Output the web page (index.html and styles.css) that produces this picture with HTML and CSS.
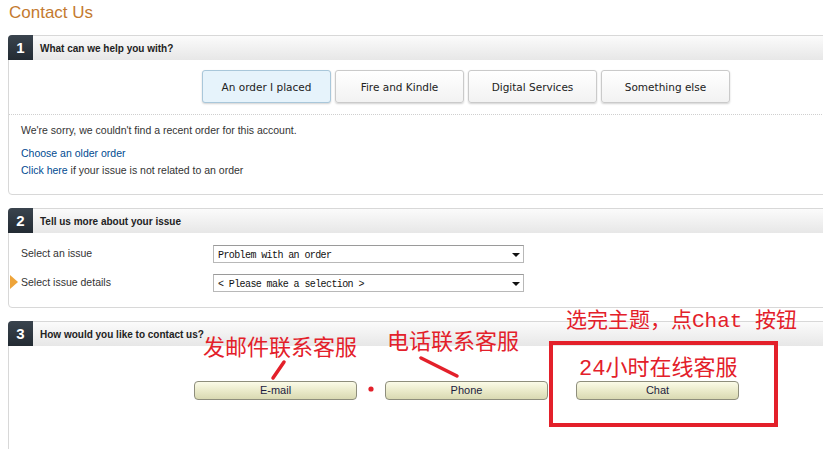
FILE: index.html
```html
<!DOCTYPE html>
<html lang="en">
<head>
  <meta charset="UTF-8" />
  <title>Contact Us</title>
  <link rel="stylesheet" href="styles.css">
</head>
<body>

  <h1 class="page-title">Contact Us</h1>

  <div class="panel">
    <div class="panel-head">
      <span class="step">1</span>
      <span class="panel-title">What can we help you with?</span>
    </div>
    <div class="topics">
      <button class="topic active">An order I placed</button>
      <button class="topic">Fire and Kindle</button>
      <button class="topic">Digital Services</button>
      <button class="topic">Something else</button>
    </div>
    <div class="order-info">
      <p class="sorry">We're sorry, we couldn't find a recent order for this account.</p>
      <p class="older"><a href="#">Choose an older order</a></p>
      <p class="other"><a href="#">Click here</a> if your issue is not related to an order</p>
    </div>
  </div>

  <div class="panel">
    <div class="panel-head">
      <span class="step">2</span>
      <span class="panel-title">Tell us more about your issue</span>
    </div>
    <div class="issue-form">
      <div class="issue-row">
        <label>Select an issue</label>
        <div class="select-box">Problem with an order</div>
      </div>
      <div class="issue-row current">
        <label>Select issue details</label>
        <div class="select-box">&lt; Please make a selection &gt;</div>
      </div>
    </div>
  </div>

  <div class="panel contact-panel">
    <div class="panel-head">
      <span class="step">3</span>
      <span class="panel-title">How would you like to contact us?</span>
    </div>
    <div class="contact-buttons">
      <button class="contact-btn">E-mail</button>
      <button class="contact-btn">Phone</button>
      <button class="contact-btn">Chat</button>
    </div>

    <!-- red notes drawn on top of the screenshot -->
    <div class="note note-top">选完主题，点Chat 按钮</div>
    <div class="note note-mail">发邮件联系客服</div>
    <div class="note note-phone">电话联系客服</div>
    <div class="note note-chat">24小时在线客服</div>
    <div class="note-box"></div>
    <svg class="note-marks" width="500" height="120" viewBox="0 0 500 120">
      <line x1="275" y1="40" x2="264" y2="56" stroke="#e3202a" stroke-width="3.5" stroke-linecap="round"/>
      <line x1="412" y1="36" x2="448" y2="54" stroke="#e3202a" stroke-width="3.5" stroke-linecap="round"/>
      <circle cx="362" cy="67" r="2.6" fill="#e3202a"/>
    </svg>
  </div>

</body>
</html>
```

FILE: styles.css
```css
html, body {
  overflow: hidden;
}
body {
  margin: 0;
  font-family: Arial, "Liberation Sans", sans-serif;
  color: #333;
  background: #fff;
}
a {
  color: #004b91;
  text-decoration: none;
}
p {
  margin: 0;
}
.page-title {
  margin: 0 0 12px 9px;
  padding-top: 3px;
  font-size: 17px;
  line-height: 20px;
  font-weight: normal;
  color: #c47a2f;
}
.panel {
  margin: 0 -40px 13px 8px;
  border: 1px solid #d8d8d8;
  border-radius: 4px;
  background: #fff;
}
.panel-head {
  display: flex;
  align-items: center;
  height: 24px;
  background: linear-gradient(#fbfbfb, #e7e7e7);
  border-radius: 4px 4px 0 0;
}
.step {
  width: 25px;
  height: 25px;
  margin: -1px 0 0 -1px;
  display: flex;
  align-items: center;
  justify-content: center;
  background: linear-gradient(#3a444e, #232b33);
  border-radius: 4px 0 0 0;
  color: #fff;
  font-weight: bold;
  font-size: 15px;
}
.panel-title {
  margin-left: 7px;
  font-size: 10px;
  font-weight: bold;
  color: #222;
}
.topics {
  display: flex;
  gap: 4px;
  padding: 10px 0 0 193px;
}
.topic {
  width: 129px;
  height: 33px;
  border: 1px solid #cacaca;
  border-radius: 3px;
  background: linear-gradient(#fff, #f2f2f2);
  box-shadow: 0 1px 2px rgba(0,0,0,0.18);
  font-family: "DejaVu Sans", Verdana, sans-serif;
  font-size: 10.5px;
  color: #222;
  padding: 0;
}
.topic.active {
  background: #e6f3fb;
  border-color: #a9c7da;
}
.order-info {
  margin-top: 11px;
  border-top: 1px dotted #cfcfcf;
  padding: 8px 12px 17px;
  font-size: 10.5px;
  line-height: 14px;
}
.older {
  margin-top: 9px;
}
.other {
  margin-top: 3px;
}
.issue-form {
  padding: 12px 0 15px 12px;
  display: flex;
  flex-direction: column;
  gap: 11px;
}
.issue-row {
  position: relative;
  display: flex;
  align-items: center;
  font-size: 10.5px;
}
.issue-row label {
  width: 192px;
  margin-top: -2px;
}
.issue-row.current::before {
  content: "";
  position: absolute;
  left: -11px;
  top: 1px;
  border-left: 8px solid #eea43a;
  border-top: 7px solid transparent;
  border-bottom: 7px solid transparent;
}
.select-box {
  position: relative;
  width: 305px;
  height: 16px;
  padding-left: 4px;
  border: 1px solid #b8b8b8;
  border-top-color: #9a9a9a;
  font-family: "Liberation Mono", monospace;
  font-size: 10px;
  letter-spacing: -0.6px;
  line-height: 19px;
  color: #111;
}
.select-box::after {
  content: "";
  position: absolute;
  right: 3px;
  top: 7px;
  border-top: 4px solid #111;
  border-left: 4px solid transparent;
  border-right: 4px solid transparent;
}
.contact-panel {
  position: relative;
}
.contact-buttons {
  display: flex;
  gap: 28px;
  padding: 35px 0 80px 185px;
}
.contact-btn {
  width: 163px;
  height: 19px;
  border: 1px solid #8e8e7c;
  border-radius: 4px;
  background: linear-gradient(#fbfbe8, #e9e9c8 55%, #d9d9b2);
  font-family: Arial, "Liberation Sans", sans-serif;
  font-size: 11px;
  line-height: 17px;
  color: #1c1c40;
  padding: 0;
}
.note {
  position: absolute;
  color: #e3202a;
  font-family: "Liberation Mono", "Noto Sans CJK SC", monospace;
  font-size: 22px;
  line-height: 22px;
  white-space: nowrap;
}
.note-top {
  left: 557px;
  top: -11px;
  font-size: 21px;
}
.note-mail {
  left: 194px;
  top: 17px;
}
.note-phone {
  left: 378px;
  top: 11px;
}
.note-chat {
  left: 570px;
  top: 37px;
}
.note-box {
  position: absolute;
  left: 540px;
  top: 19px;
  width: 221px;
  height: 78px;
  border: 4px solid #e3202a;
}
.note-marks {
  position: absolute;
  left: 0;
  top: 0;
}
```
